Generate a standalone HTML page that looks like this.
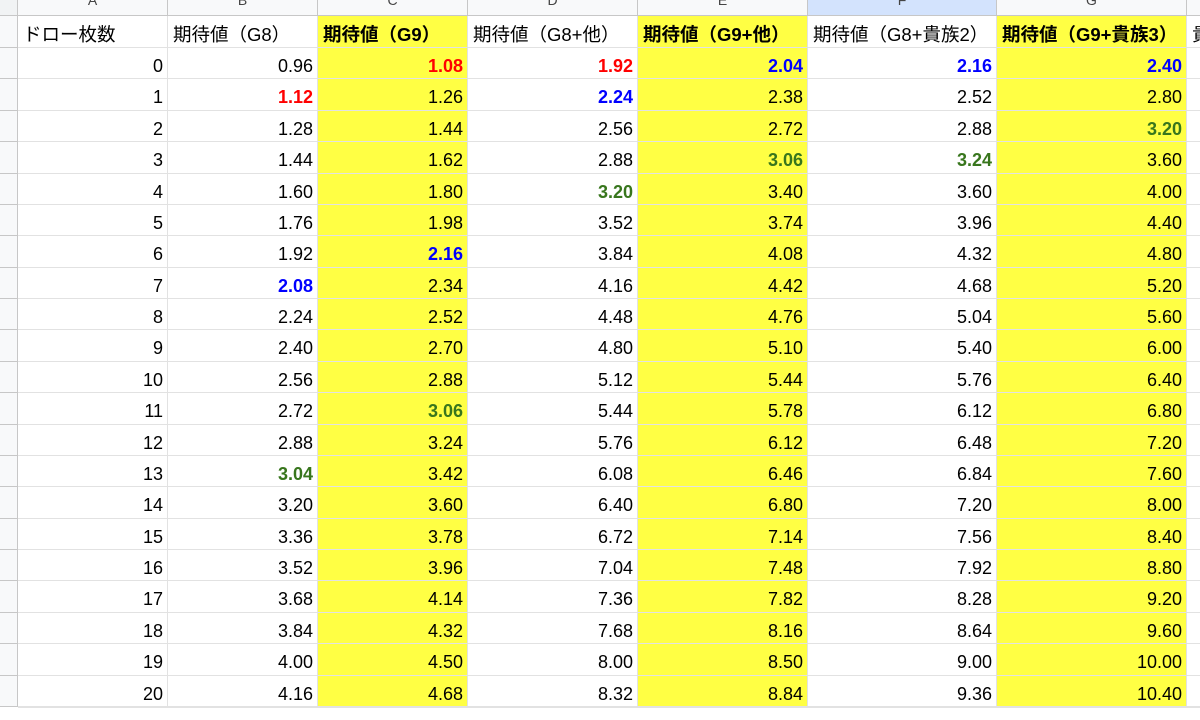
<!DOCTYPE html>
<html><head><meta charset="utf-8"><style>
body{margin:0;width:1200px;height:720px;overflow:hidden;background:#fff;font-family:"Liberation Sans","Noto Sans CJK JP",Arial,sans-serif;position:relative}
.c{position:absolute;box-sizing:border-box;border-right:1px solid #e2e2e2;border-bottom:1px solid #e2e2e2;font-size:18px;color:#000;white-space:nowrap;overflow:hidden}
.r{text-align:right;padding-right:4px}
.y{background:#ffff44}
.b{font-weight:bold}
.red{color:#ff0000;font-weight:bold}.blu{color:#0000ff;font-weight:bold}.grn{color:#38761d;font-weight:bold}
.h{position:absolute;top:0;height:16px;box-sizing:border-box;border-right:1px solid #c7c7c7;border-bottom:1px solid #c7c7c7;background:#f8f9fa;color:#444;font-size:14px;text-align:center;line-height:0px;overflow:hidden}
</style></head><body>
<div id="g"></div>
<script>
const xs=[18,168,318,468,638,808,997,1187,1300];
const L=["A","B","C","D","E","F","G","H"];
let h='<div class="h" style="left:0;width:18px;background:#f1f3f4"></div>';
for(let i=0;i<8;i++)h+=`<div class="h" style="left:${xs[i]}px;width:${xs[i+1]-xs[i]}px;${i==5?'background:#d3e3fd;':''}">${L[i]}</div>`;
const ys=[16,48];for(let i=1;i<=21;i++)ys.push(48+i*31.38);
for(let r=0;r<22;r++){h+=`<div class="h" style="top:${ys[r]}px;left:0;width:18px;height:${ys[r+1]-ys[r]}px;line-height:20px"></div>`;}
const heads=["ドロー枚数","期待値（G8）","期待値（G9）","期待値（G8+他）","期待値（G9+他）","期待値（G8+貴族2）","期待値（G9+貴族3）","貴"];
const yel=[0,0,1,0,1,0,1,0];
for(let i=0;i<8;i++)h+=`<div class="c ${yel[i]?'y b':''}" style="left:${xs[i]}px;top:16px;width:${xs[i+1]-xs[i]}px;height:32px;padding-left:5px;line-height:38px;font-size:18.5px">${heads[i]}</div>`;
const base=[[0.96,0.16],[1.08,0.18],[1.92,0.32],[2.04,0.34],[2.16,0.36],[2.40,0.40]];
const col={"1,1":"red","1,7":"blu","1,13":"grn","2,0":"red","2,6":"blu","2,11":"grn","3,0":"red","3,1":"blu","3,4":"grn","4,0":"blu","4,3":"grn","5,0":"blu","5,3":"grn","6,0":"blu","6,2":"grn"};
for(let r=0;r<=21;r++){const t=ys[r+1],hh=ys[r+2]-ys[r+1];
for(let i=0;i<8;i++){let txt="";if(r<=20){if(i==0)txt=r;else if(i<7)txt=(base[i-1][0]+base[i-1][1]*r).toFixed(2);}
const cl=col[i+","+r]||"";
h+=`<div class="c r ${yel[i]?'y':''} ${cl}" style="left:${xs[i]}px;top:${t}px;width:${xs[i+1]-xs[i]}px;height:${hh}px;line-height:${hh+6}px">${txt}</div>`;}}
document.getElementById("g").innerHTML=h;
</script>
</body></html>
